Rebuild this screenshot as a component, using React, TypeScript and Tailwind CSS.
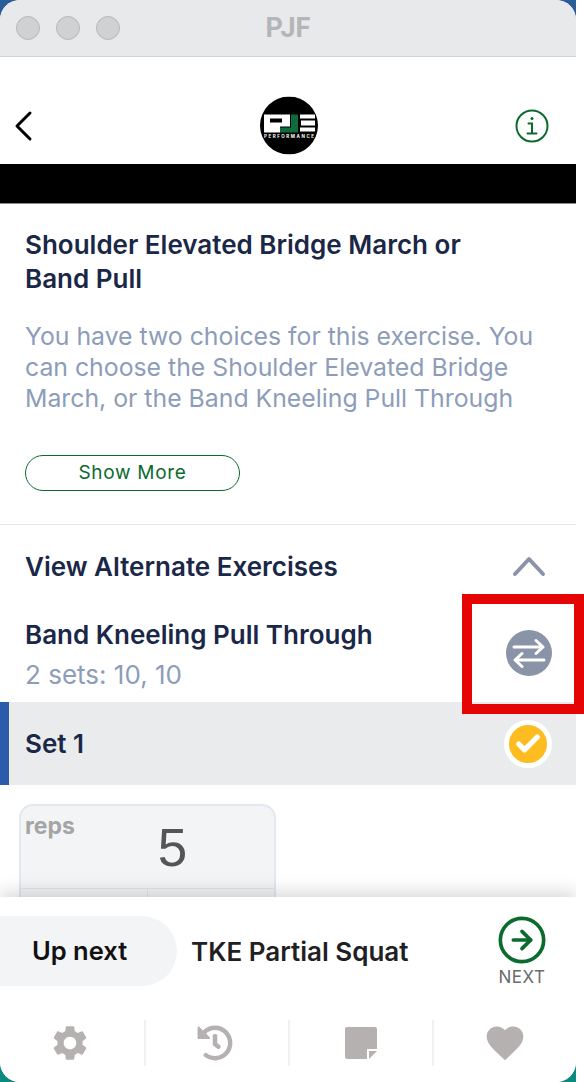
import { FC } from "react";
import { Check, CircleArrowRight } from "lucide-react";
import { FaHistory } from "react-icons/fa";
import { MdFavorite, MdSettings } from "react-icons/md";

const LogoIcon: FC = () => (
  <svg width="58" height="58" viewBox="0 0 58 58" className="translate-x-[1px] -translate-y-[0.5px]">
    <circle cx="29" cy="29" r="29" fill="#000" />
    <path d="M4 18H30V30H20V36H4Z" fill="#fff" />
    <rect x="10" y="22" width="12" height="4" fill="#000" />
    <path d="M31 18H38V36H20V31H31Z" fill="#0e6b3c" />
    <rect x="40" y="18" width="15" height="4" fill="#fff" />
    <rect x="41" y="24" width="14" height="5" fill="#fff" />
    <rect x="40" y="31" width="15" height="4" fill="#fff" />
    <text x="29" y="41.5" textAnchor="middle" fontSize="4.5" fontWeight="700" fill="#fff" textLength="50">
      PERFORMANCE
    </text>
  </svg>
);

const InfoIcon: FC = () => (
  <svg width="34" height="38" viewBox="0 0 34 38" fill="none" stroke="#0a6b2d" strokeWidth="2">
    <circle cx="17" cy="19" r="15.5" />
    <circle cx="17" cy="11.5" r="1.5" fill="#0a6b2d" stroke="none" />
    <path d="M13.5 16.5H17V26M12.5 26.5h9" strokeLinecap="round" />
  </svg>
);

const BackIcon: FC = () => (
  <svg width="49" height="32" viewBox="0 0 49 32" fill="none" stroke="#000" strokeWidth="3" strokeLinecap="round" strokeLinejoin="round">
    <path d="M18 3L5 16L18 29" />
  </svg>
);

const CollapseIcon: FC = () => (
  <svg width="36" height="24" viewBox="0 0 36 24" fill="none" stroke="#8a94a8" strokeWidth="4" strokeLinecap="round" strokeLinejoin="round">
    <path d="M4 20L18 5L32 20" />
  </svg>
);

const SwapIcon: FC = () => (
  <svg width="46" height="46" viewBox="0 0 46 46" fill="none" stroke="#fff" strokeWidth="3" strokeLinecap="round" strokeLinejoin="round">
    <path d="M8 17H37M30 10.5L37 17L30 23.5" />
    <path d="M38 30H9M16 23.5L9 30L16 36.5" />
  </svg>
);

const NoteIcon: FC = () => (
  <svg width="32" height="32" viewBox="0 0 32 32">
    <path d="M2 0H30A2 2 0 0 1 32 2V22H22V32H2A2 2 0 0 1 0 30V2A2 2 0 0 1 2 0Z" fill="#b5b1b1" />
    <path d="M24 24H32L24 32Z" fill="#b5b1b1" />
  </svg>
);

const App: FC = () => {
  return (
    <div className="relative w-[584px] h-[1082px] bg-white font-['Inter',sans-serif]">
      <div className="w-[576px] h-full bg-linear-to-b from-[#2a5c9a] to-[#0b8a80]">
        <div className="flex flex-col h-full rounded-[20px] overflow-hidden bg-white">
          <div className="relative flex items-center h-[57px] shrink-0 gap-[16px] pl-[16px] bg-[#e8e9eb] border-b border-[#d2d3d5]">
            <span className="w-[24px] h-[24px] rounded-full bg-[#d0d1d3] border border-[#b7b8ba]" />
            <span className="w-[24px] h-[24px] rounded-full bg-[#d0d1d3] border border-[#b7b8ba]" />
            <span className="w-[24px] h-[24px] rounded-full bg-[#d0d1d3] border border-[#b7b8ba]" />
            <span className="absolute inset-x-0 text-center text-[27px] font-bold text-[#b4b5b7] font-['Roboto',sans-serif]">
              PJF
            </span>
          </div>

          <div className="flex-1 min-h-0 overflow-hidden">
            <div className="flex items-center justify-between h-[107px] pt-[30px] pl-[12px] pr-[27px]">
              <BackIcon />
              <LogoIcon />
              <InfoIcon />
            </div>
            <div className="h-[40px] bg-black border-b border-[#8a8a8a]" />

            <div className="px-[25px] pt-[24px] h-[321px] border-b border-[#e2e8f0]">
              <h1 className="max-w-[480px] text-[26px] leading-[34px] font-semibold text-[#1a2747]">
                Shoulder Elevated Bridge March or Band Pull
              </h1>
              <p className="mt-[25px] text-[24.8px] leading-[31px] text-[#8d9db9]">
                You have two choices for this exercise. You can choose the Shoulder Elevated Bridge March, or the Band Kneeling Pull Through
              </p>
              <button className="block mt-[41px] w-[215px] h-[36px] rounded-full border border-[#0a6b2d] text-[19px] tracking-[0.7px] text-[#0a6b2d]">
                Show More
              </button>
            </div>

            <div className="flex items-center justify-between h-[82px] pl-[25px] pr-[29px]">
              <span className="text-[26px] font-semibold text-[#1a2747]">View Alternate Exercises</span>
              <CollapseIcon />
            </div>

            <div className="flex items-center justify-between h-[95px] pl-[25px] pr-[24px] pb-[1px]">
              <div>
                <div className="text-[26px] leading-[34px] font-semibold text-[#1a2747]">Band Kneeling Pull Through</div>
                <div className="mt-[8px] text-[26px] leading-[30px] text-[#8d9db9]">2 sets: 10, 10</div>
              </div>
              <div className="w-[46px] h-[46px] -mt-[2px] rounded-full bg-[#8a94a8]">
                <SwapIcon />
              </div>
            </div>

            <div className="flex items-center justify-between h-[83px] pl-[16px] pr-[24px] border-l-[9px] border-[#2a5cab] bg-[#e9ebed]">
              <span className="text-[26px] font-semibold text-[#1a2747]">Set 1</span>
              <div className="flex items-center justify-center w-[48px] h-[48px] rounded-full bg-[#fdbd21] border-[5px] border-white">
                <Check size={28} strokeWidth={4.5} color="#fff" />
              </div>
            </div>

            <div className="mt-[19px] ml-[19px] w-[257px] h-[120px] rounded-t-[14px] border-2 border-[#e2e8f0] bg-[#f3f4f6]">
              <div className="relative h-[82px]">
                <span className="absolute left-[4px] top-[3px] text-[23px] font-bold text-[#a5a5a5]">reps</span>
                <span className="block pt-[10px] pl-[50px] text-center text-[53px] leading-[64px] font-['Liberation_Sans',sans-serif] text-[#555]">
                  5
                </span>
              </div>
              <div className="grid grid-cols-2 h-[36px] border-t border-[#e2e4e8]">
                <div className="border-r border-[#e2e4e8]" />
              </div>
            </div>
          </div>

          <div className="relative shrink-0 h-[185px] bg-white shadow-[0_-6px_16px_rgba(0,0,0,0.14)]">
            <div className="flex items-center h-[70px] mt-[19px]">
              <div className="flex items-center w-[177px] h-[70px] pl-[32px] rounded-r-full bg-[#f3f4f6] text-[25.5px] font-semibold text-[#111]">
                Up next
              </div>
              <span className="ml-[14px] flex-1 text-[26px] font-semibold text-[#1f2023]">TKE Partial Squat</span>
              <div className="flex flex-col items-center w-[54px] mr-[27px]">
                <CircleArrowRight size={52} strokeWidth={1.7} color="#0a6b2d" />
                <span className="text-[17px] leading-[22px] tracking-[0.5px] text-[#6a6a6a]">NEXT</span>
              </div>
            </div>
            <div className="grid grid-cols-4 items-center mt-[34px] text-[#b5b1b1]">
              <div className="flex items-center justify-center h-[46px] pr-[4px]">
                <MdSettings size={42} />
              </div>
              <div className="flex items-center justify-center h-[46px] pr-[4px] border-l-2 border-[#f0f1f3]">
                <FaHistory size={36} />
              </div>
              <div className="flex items-center justify-center h-[46px] border-l-2 border-[#f0f1f3]">
                <NoteIcon />
              </div>
              <div className="flex items-center justify-center h-[46px] border-l-2 border-[#f0f1f3]">
                <MdFavorite size={44} />
              </div>
            </div>
          </div>
        </div>
      </div>

      <div className="absolute left-[462px] top-[594px] w-[122px] h-[120px] border-[10px] border-[#e60505]" />
    </div>
  );
};

export default App;
